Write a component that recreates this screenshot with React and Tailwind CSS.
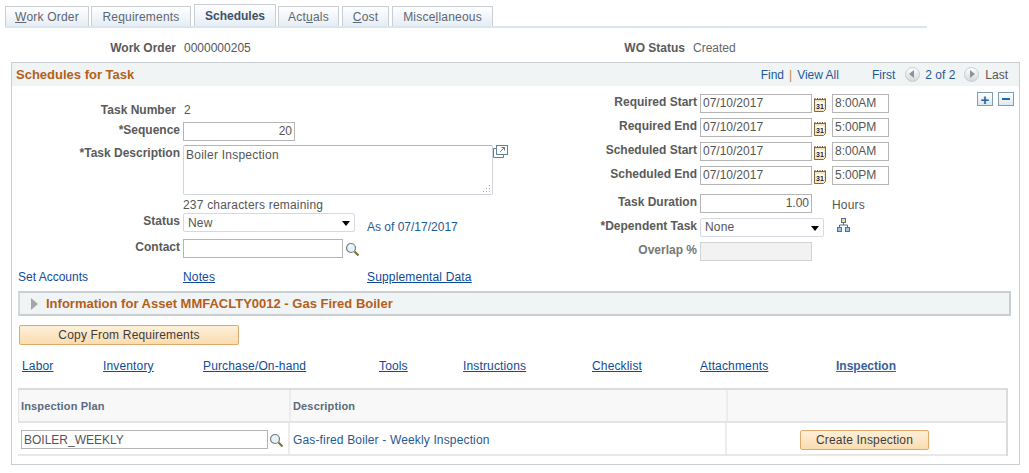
import React from 'react'

// small drawings used next to the fields
const CalendarIcon = () => (
  <svg width="12" height="15" viewBox="0 0 12 15" className="shrink-0">
    <path d="M0.5 2.5H11.5V12.5L9.5 14.5H0.5Z" fill="#f5e6bd" stroke="#7a6a45" />
    <path d="M1 1V3M3.5 1V3M6 1V3M8.5 1V3M11 1V3" stroke="#6b5a35" />
    <rect x="2" y="5" width="8" height="7" fill="#fffdf2" />
    <text x="6" y="11.5" textAnchor="middle" fontSize="7" fontWeight="700" fill="#222" fontFamily="Liberation Sans, sans-serif">31</text>
  </svg>
)

const LookupIcon = () => (
  <svg width="15" height="15" viewBox="0 0 15 15" className="shrink-0">
    <circle cx="6" cy="6" r="4.5" fill="#e6f0f5" stroke="#6d8088" strokeWidth="1.2" />
    <path d="M3.5 5A3 3 0 0 1 6 3" stroke="#fff" fill="none" />
    <path d="M9.5 9.5L13.5 13.5" stroke="#7c6a2e" strokeWidth="2" />
  </svg>
)

const ExpandIcon = () => (
  <svg width="15" height="13" viewBox="0 0 15 13" className="shrink-0">
    <rect x="3.5" y="0.5" width="11" height="9" fill="#fff" stroke="#5f7f94" />
    <path d="M0.5 3.5H3.5V9.5H10.5V12.5H0.5Z" fill="#fff" stroke="#5f7f94" />
    <path d="M7 7L11.5 2.5M8.5 2.5H11.5V5.5" stroke="#5f7f94" fill="none" />
  </svg>
)

const TreeIcon = () => (
  <svg width="14" height="14" viewBox="0 0 14 14" className="shrink-0">
    <rect x="4.5" y="0.5" width="4" height="4" fill="#f6dc93" stroke="#55708a" />
    <path d="M6.5 4.5V7M2.5 9.5V7H10.5V9.5" stroke="#55708a" fill="none" />
    <rect x="0.5" y="9.5" width="4" height="4" fill="#9cc5ea" stroke="#55708a" />
    <rect x="8.5" y="9.5" width="4" height="4" fill="#9cc5ea" stroke="#55708a" />
  </svg>
)

const Tab = ({ children, active, w }) => (
  <div className={`flex items-center justify-center border border-b-0 border-[#c8ced4] bg-gradient-to-b from-white to-[#e6edf5] ${w} ${active ? 'h-[22px] font-bold text-[#3f5067] border-[#bcc5ce]' : 'h-[20px] tracking-[0.2px] text-[#5c6670]'}`}>
    <span>{children}</span>
  </div>
)

const Input = ({ value, w, right, className = '' }) => (
  <div className={`flex h-[19px] shrink-0 items-center border border-[#b5b5b5] bg-white px-[2px] pb-[1px] text-[#555] ${right ? 'justify-end' : ''} ${w} ${className}`}>
    {value}
  </div>
)

const Select = ({ value, w, raised }) => (
  <div className={`flex h-[19px] shrink-0 items-center justify-between rounded-[2px] border border-[#d5d9e3] bg-white pl-1 pr-[4px] tracking-[0.2px] text-[#555] ${w}`}>
    <span className={raised ? 'mb-[2px]' : ''}>{value}</span>
    <span className="mt-[2px] h-0 w-0 border-x-[4px] border-t-[5px] border-x-transparent border-t-black"></span>
  </div>
)

const Label = ({ children, w, muted }) => (
  <div className={`shrink-0 pb-[3px] text-right font-bold ${muted ? 'text-[#777]' : 'text-[#5a5a5a]'} ${w}`}>{children}</div>
)

const DateRow = ({ label, time }) => (
  <div className="flex h-[19px] items-center">
    <Label w="w-[105px]">{label}</Label>
    <Input value="07/10/2017" w="w-[112px]" className="ml-[3px]" />
    <div className="ml-[2px] mr-[6px] mt-[1px]"><CalendarIcon /></div>
    <Input value={time} w="w-[57px]" />
  </div>
)

const PsLink = ({ children, w, bold }) => (
  <div className={`shrink-0 ${w}`}>
    <a className={`underline ${bold ? 'font-bold text-[#3a5f9e]' : 'tracking-[0.15px] text-[#0e4b9b]'}`}>{children}</a>
  </div>
)

const OrangeButton = ({ children, w }) => (
  <button className={`flex h-5 shrink-0 items-center justify-center rounded-[2px] border border-[#dfa96a] bg-gradient-to-b from-[#fdf0d8] to-[#fbdcb0] tracking-[0.18px] text-[#3c3c3c] ${w}`}>
    {children}
  </button>
)

export default function App() {
  return (
    <div className="h-[473px] w-[1029px] overflow-hidden bg-white pt-[5px] font-['Liberation_Sans',Arial,sans-serif] text-[12px] leading-none text-[#555]">
      {/* tabs */}
      <div className="ml-[5px] flex h-[23px] w-[922px] items-end border-b-2 border-[#dae5f0]">
        <Tab w="w-[84px]"><u>W</u>ork Order</Tab>
        <div className="w-[2px]"></div>
        <Tab w="w-[100px]">Re<u>q</u>uirements</Tab>
        <div className="w-[3px]"></div>
        <Tab w="w-[82px]" active>Schedules</Tab>
        <div className="w-[2px]"></div>
        <Tab w="w-[61px]">Act<u>u</u>als</Tab>
        <div className="w-[3px]"></div>
        <Tab w="w-[47px]"><u>C</u>ost</Tab>
        <div className="w-[3px]"></div>
        <Tab w="w-[101px]">Misce<u>l</u>laneous</Tab>
      </div>

      {/* work order header */}
      <div className="mt-[13px] flex h-[14px] items-center">
        <div className="w-[176px] text-right font-bold text-[#5a5a5a]">Work Order</div>
        <div className="ml-2 w-[401px]">0000000205</div>
        <div className="w-[100px] text-right font-bold text-[#5a5a5a]">WO Status</div>
        <div className="ml-2 text-[#666]">Created</div>
      </div>

      {/* main panel */}
      <div className="ml-[11px] mt-[7px] h-[403px] w-[1009px] border border-[#c9ced3]">
        <div className="flex h-[23px] items-center justify-between bg-[#f0f4f5] pl-1 pr-[11px]">
          <div className="mb-[1px] text-[13px] font-bold text-[#b35f1b]">Schedules for Task</div>
          <div className="mt-[1px] flex items-center text-[#1f5a96]">
            <span>Find</span>
            <span className="mx-[5px] text-[#c08a3c]">|</span>
            <span>View All</span>
            <span className="ml-[33px]">First</span>
            <span className="ml-[10px] mb-[2px] flex h-[15px] w-[15px] items-center justify-center rounded-full border border-[#c8ccd0] bg-gradient-to-b from-white to-[#d5d8db]">
              <span className="mr-[2px] h-0 w-0 border-y-[4px] border-r-[5px] border-y-transparent border-r-[#8c9499]"></span>
            </span>
            <span className="ml-[5px]">2 of 2</span>
            <span className="ml-[9px] mb-[2px] flex h-[15px] w-[15px] items-center justify-center rounded-full border border-[#c8ccd0] bg-gradient-to-b from-white to-[#d5d8db]">
              <span className="ml-[2px] h-0 w-0 border-y-[4px] border-l-[5px] border-y-transparent border-l-[#8c9499]"></span>
            </span>
            <span className="ml-[6px] text-[#555]">Last</span>
          </div>
        </div>

        <div className="flex h-[184px]">
          {/* left column */}
          <div className="w-[580px] shrink-0">
            <div className="mt-[17px] flex h-[14px] items-center">
              <div className="w-[164px] text-right font-bold text-[#5a5a5a]">Task Number</div>
              <span className="ml-[8px]">2</span>
            </div>
            <div className="mt-[5px] flex h-[19px] items-center">
              <Label w="w-[168px]">*Sequence</Label>
              <Input value="20" w="w-[112px]" right className="ml-[3px]" />
            </div>
            <div className="mt-[4px] flex">
              <Label w="w-[168px]"><span className="relative top-[2px]">*Task Description</span></Label>
              <div className="relative ml-[3px] h-[50px] w-[310px] rounded-[2px] border border-[#d0d4dc] border-t-[#b5b5b5] bg-white px-[2px] pt-[3px] tracking-[0.24px]">
                Boiler Inspection
                <svg width="9" height="9" viewBox="0 0 9 9" className="absolute bottom-[1px] right-[1px]">
                  <path d="M7 1h1v1H7zM4 4h1v1H4zM7 4h1v1H7zM1 7h1v1H1zM4 7h1v1H4zM7 7h1v1H7z" fill="#aaa" />
                </svg>
              </div>
              <div><ExpandIcon /></div>
            </div>
            <div className="ml-[171px] mt-[3px] h-[15px] leading-[15px] tracking-[0.2px]">237 characters remaining</div>
            <div className="flex">
              <Label w="w-[168px]"><span className="relative top-[2px]">Status</span></Label>
              <div className="ml-[3px]"><Select value="New" w="w-[172px]" /></div>
              <div className="ml-3 mt-2 text-[#1f5a96]">As of 07/17/2017</div>
            </div>
            <div className="mt-[6px] flex h-[19px] items-center">
              <Label w="w-[168px]">Contact</Label>
              <Input value="" w="w-[160px]" className="ml-[3px]" />
              <div className="ml-[2px] mt-[2px]"><LookupIcon /></div>
            </div>
          </div>

          {/* right column */}
          <div className="w-[320px] shrink-0 pt-2">
            <div className="flex flex-col gap-[5px]">
              <DateRow label="Required Start" time="8:00AM" />
              <DateRow label="Required End" time="5:00PM" />
              <DateRow label="Scheduled Start" time="8:00AM" />
              <DateRow label="Scheduled End" time="5:00PM" />
            </div>
            <div className="mt-[9px] flex h-[19px] items-center">
              <Label w="w-[105px]">Task Duration</Label>
              <Input value="1.00" w="w-[112px]" right className="ml-[3px]" />
              <div className="ml-5 mt-[3px] tracking-[0.2px]">Hours</div>
            </div>
            <div className="mt-[5px] flex h-[19px] items-center">
              <Label w="w-[105px]">*Dependent Task</Label>
              <div className="ml-[3px]"><Select value="None" w="w-[124px]" raised /></div>
              <div className="mb-[5px] ml-[13px]"><TreeIcon /></div>
            </div>
            <div className="mt-[5px] flex h-[19px] items-center">
              <Label w="w-[105px]" muted>Overlap %</Label>
              <div className="ml-[3px] h-[19px] w-[112px] border border-[#cfd3d6] bg-[#f2f2f2]"></div>
            </div>
          </div>

          {/* add / delete row */}
          <div className="ml-[65px] flex gap-[5px] pt-[6px]">
            <div className="flex h-[14px] w-4 items-center justify-center border border-[#7f9db2] bg-gradient-to-b from-white to-[#dfe8ee] text-[15px] font-bold text-[#1f6aa8]">+</div>
            <div className="flex h-[14px] w-4 items-center justify-center border border-[#7f9db2] bg-gradient-to-b from-white to-[#dfe8ee]">
              <span className="h-[2px] w-2 bg-[#1f6aa8]"></span>
            </div>
          </div>
        </div>

        {/* related links */}
        <div className="ml-[6px] flex h-[14px] items-center">
          <div className="w-[165px] text-[#0e4b9b]">Set Accounts</div>
          <PsLink w="w-[184px]">Notes</PsLink>
          <PsLink w="w-[200px]">Supplemental Data</PsLink>
        </div>

        {/* collapsed asset section */}
        <div className="ml-[6px] mt-[7px] flex h-[25px] w-[993px] items-center border-2 border-[#c9ced3] border-l-[#d5d9dd] bg-[#f0f4f5] pl-[11px]">
          <span className="h-0 w-0 border-y-[6px] border-l-[7px] border-y-transparent border-l-[#a5a8aa]"></span>
          <span className="ml-[8px] text-[13px] font-bold text-[#b35f1b]">Information for Asset MMFACLTY0012 - Gas Fired Boiler</span>
        </div>

        <div className="ml-[7px] mt-[9px]">
          <OrangeButton w="w-[220px]">Copy From Requirements</OrangeButton>
        </div>

        {/* sub page links */}
        <div className="ml-[10px] mt-[14px] flex h-[14px] items-center">
          <PsLink w="w-[81px]">Labor</PsLink>
          <PsLink w="w-[100px]">Inventory</PsLink>
          <PsLink w="w-[176px]">Purchase/On-hand</PsLink>
          <PsLink w="w-[84px]">Tools</PsLink>
          <PsLink w="w-[129px]">Instructions</PsLink>
          <PsLink w="w-[108px]">Checklist</PsLink>
          <PsLink w="w-[136px]">Attachments</PsLink>
          <PsLink w="w-[80px]" bold>Inspection</PsLink>
        </div>

        {/* inspection grid */}
        <div className="ml-[6px] mt-[15px] w-[990px] border-t-2 border-r-2 border-[#dcdcdc]">
          <div className="grid h-[33px] grid-cols-[272px_437px_1fr] items-center border-b-2 border-l border-[#e4e4e4] bg-[#f8f8f8] text-[11px] font-bold tracking-[0.15px] text-[#5b6b7d]">
            <div className="flex h-full items-center border-r-2 border-[#ececec] pl-[2px] pt-[1px]">Inspection Plan</div>
            <div className="flex h-full items-center border-r-2 border-[#ececec] pl-[2px] pt-[1px]">Description</div>
            <div></div>
          </div>
          <div className="grid h-[33px] grid-cols-[272px_437px_1fr] border-b-2 border-[#e8e8e8]">
            <div className="flex h-full items-start border-r-2 border-[#ececec] pl-[3px] pt-[7px]">
              <Input value={<span className="mt-[2px]">BOILER_WEEKLY</span>} w="w-[247px]" />
              <div className="ml-[1px] mt-[3px]"><LookupIcon /></div>
            </div>
            <div className="flex h-full items-center border-r-2 border-[#ececec] pb-0 pl-[3px] pt-[2px] tracking-[0.15px] text-[#1f5a96]">Gas-fired Boiler - Weekly Inspection</div>
            <div className="flex justify-end pr-[77px] pt-[7px]">
              <OrangeButton w="w-[129px]">Create Inspection</OrangeButton>
            </div>
          </div>
        </div>
      </div>
    </div>
  )
}
